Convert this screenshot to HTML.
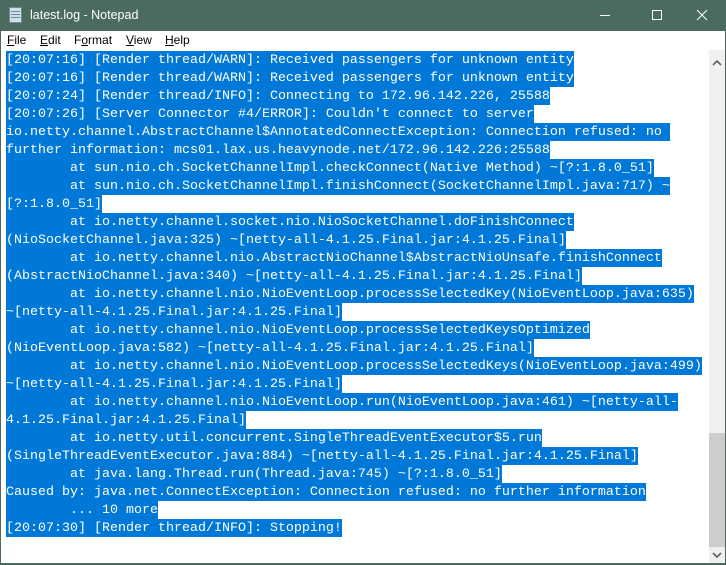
<!DOCTYPE html>
<html><head><meta charset="utf-8"><style>
*{margin:0;padding:0;box-sizing:border-box;forced-color-adjust:none}
html,body{width:726px;height:565px;overflow:hidden;background:#fff;font-family:"Liberation Sans",sans-serif;position:relative}
.title{position:absolute;left:0;top:0;width:726px;height:31px;border-top:31px solid #4a6b5e;background-image:linear-gradient(#4a6b5e,#4a6b5e);color:#fff;font-size:12px;z-index:5}
.title .t{position:absolute;left:30px;top:-23px;font-size:12.5px;color:#fff}
.icon{position:absolute;left:9px;top:-24px;width:13px;height:16px;background:#cfe0ea;border:1px solid #6c8a9a}
.icon:before{content:"";position:absolute;left:1px;top:3px;width:9px;height:8px;background:repeating-linear-gradient(#6d8796 0 1px,transparent 1px 3px)}
.ctl{position:absolute;left:600px;top:-23px}
.menu{position:absolute;left:0;top:31px;width:726px;height:19px;background:#fff;font-size:12px;color:#000}
.menu span{position:absolute;top:2px}
.edit{position:absolute;left:0;top:51px;width:709px;height:512px;background:#fff;font-family:"Liberation Mono",monospace;font-size:13.33px;line-height:18px;padding:0 0 0 6px;white-space:pre}
.edit div{height:18px}
.edit span{display:inline-block;height:18px;line-height:19px;background:#0078d7;color:#fff;vertical-align:top}
.sb{position:absolute;left:709px;top:50px;width:16px;height:513px;background:#f0f0f0}
.thumb{position:absolute;left:709px;top:433px;width:16px;height:114px;background:#cdcdcd}
.bl{position:absolute;left:0;top:31px;width:1px;height:534px;background:#4a6b5e}
.br{position:absolute;left:725px;top:31px;width:1px;height:534px;background:#4a6b5e}
.bb{position:absolute;left:0;top:563px;width:726px;height:2px;background:#4a6b5e}
</style></head><body>
<div class="title"><div class="icon"></div><div class="t">latest.log - Notepad</div>
<svg class="ctl" width="120" height="16"><line x1="0" y1="7.5" x2="10" y2="7.5" stroke="#fff"/><rect x="52.5" y="2.5" width="9" height="9" fill="none" stroke="#fff"/><path d="M97 2L107 12M107 2L97 12" stroke="#fff"/></svg>
</div>
<div class="menu"><span style="left:7px"><u>F</u>ile</span><span style="left:40px"><u>E</u>dit</span><span style="left:74px">F<u>o</u>rmat</span><span style="left:126px"><u>V</u>iew</span><span style="left:165px"><u>H</u>elp</span></div>
<div class="edit"><div><span>[20:07:16] [Render thread/WARN]: Received passengers for unknown entity</span></div><div><span>[20:07:16] [Render thread/WARN]: Received passengers for unknown entity</span></div><div><span>[20:07:24] [Render thread/INFO]: Connecting to 172.96.142.226, 25588</span></div><div><span>[20:07:26] [Server Connector #4/ERROR]: Couldn't connect to server</span></div><div><span>io.netty.channel.AbstractChannel$AnnotatedConnectException: Connection refused: no </span></div><div><span>further information: mcs01.lax.us.heavynode.net/172.96.142.226:25588</span></div><div><span>        at sun.nio.ch.SocketChannelImpl.checkConnect(Native Method) ~[?:1.8.0_51]</span></div><div><span>        at sun.nio.ch.SocketChannelImpl.finishConnect(SocketChannelImpl.java:717) ~</span></div><div><span>[?:1.8.0_51]</span></div><div><span>        at io.netty.channel.socket.nio.NioSocketChannel.doFinishConnect</span></div><div><span>(NioSocketChannel.java:325) ~[netty-all-4.1.25.Final.jar:4.1.25.Final]</span></div><div><span>        at io.netty.channel.nio.AbstractNioChannel$AbstractNioUnsafe.finishConnect</span></div><div><span>(AbstractNioChannel.java:340) ~[netty-all-4.1.25.Final.jar:4.1.25.Final]</span></div><div><span>        at io.netty.channel.nio.NioEventLoop.processSelectedKey(NioEventLoop.java:635)</span></div><div><span>~[netty-all-4.1.25.Final.jar:4.1.25.Final]</span></div><div><span>        at io.netty.channel.nio.NioEventLoop.processSelectedKeysOptimized</span></div><div><span>(NioEventLoop.java:582) ~[netty-all-4.1.25.Final.jar:4.1.25.Final]</span></div><div><span>        at io.netty.channel.nio.NioEventLoop.processSelectedKeys(NioEventLoop.java:499)</span></div><div><span>~[netty-all-4.1.25.Final.jar:4.1.25.Final]</span></div><div><span>        at io.netty.channel.nio.NioEventLoop.run(NioEventLoop.java:461) ~[netty-all-</span></div><div><span>4.1.25.Final.jar:4.1.25.Final]</span></div><div><span>        at io.netty.util.concurrent.SingleThreadEventExecutor$5.run</span></div><div><span>(SingleThreadEventExecutor.java:884) ~[netty-all-4.1.25.Final.jar:4.1.25.Final]</span></div><div><span>        at java.lang.Thread.run(Thread.java:745) ~[?:1.8.0_51]</span></div><div><span>Caused by: java.net.ConnectException: Connection refused: no further information</span></div><div><span>        ... 10 more</span></div><div><span>[20:07:30] [Render thread/INFO]: Stopping!</span></div></div>
<div class="sb"></div><div class="thumb"></div>
<svg style="position:absolute;left:709px;top:55px" width="16" height="16"><path d="M4 10L8 6L12 10" fill="none" stroke="#606060" stroke-width="1.6"/></svg>
<svg style="position:absolute;left:709px;top:547px" width="16" height="16"><path d="M4 6L8 10L12 6" fill="none" stroke="#606060" stroke-width="1.6"/></svg>
<div class="bl"></div><div class="br"></div><div class="bb"></div>
</body></html>
